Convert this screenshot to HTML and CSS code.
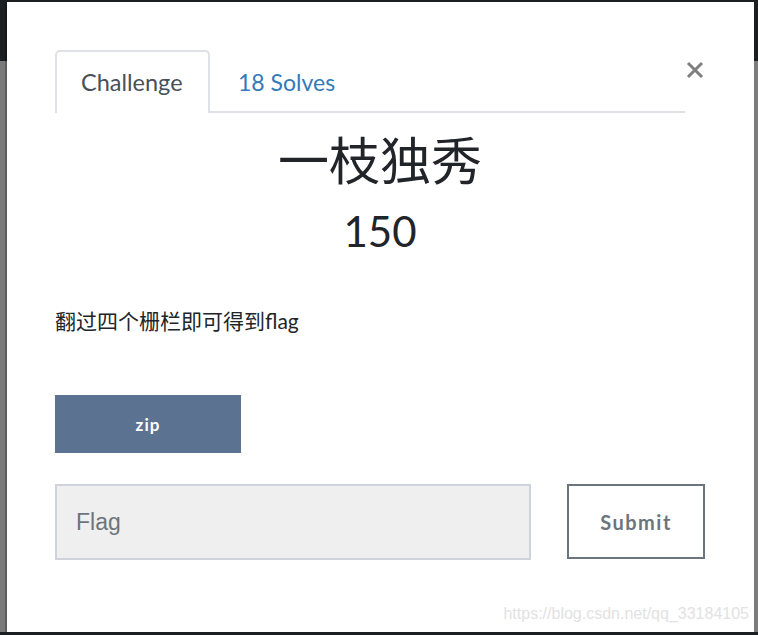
FILE: index.html
```html
<!DOCTYPE html>
<html>
<head>
<meta charset="utf-8">
<link rel="stylesheet" href="styles.css">
</head>
<body>
<div class="modal">
  <div class="modal-head">
    <nav class="tabs">
      <a class="tab active">Challenge</a>
      <a class="tab link">18 Solves</a>
    </nav>
    <button class="close" aria-label="Close">
      <svg width="18" height="18" viewBox="0 0 18 18"><path d="M2 2 L16 16 M16 2 L2 16" stroke="#7f7f7f" stroke-width="3" stroke-linecap="butt"/></svg>
    </button>
  </div>
  <h2 class="title">一枝独秀</h2>
  <h3 class="value">150</h3>
  <p class="desc">翻过四个栅栏即可得到flag</p>
  <div class="files"><a class="file-btn">zip</a></div>
  <form class="submit-row">
    <input class="flag-input" type="text" placeholder="Flag">
    <button class="submit-btn" type="button">Submit</button>
  </form>
  <div class="watermark">https://blog.csdn.net/qq_33184105</div>
</div>
</body>
</html>
```
FILE: styles.css
```css
html, body {
  margin: 0;
  padding: 0;
}
body {
  width: 758px;
  height: 635px;
  overflow: hidden;
  background: linear-gradient(to bottom, #1c1f22 0, #1c1f22 61px, #7b7b7b 61px, #7b7b7b 632px, #1c1f22 632px);
  font-family: Lato, "Noto Sans CJK SC", sans-serif;
}
.modal {
  position: relative;
  box-sizing: border-box;
  margin: 2px 4px 0 7px;
  width: 747px;
  height: 630px;
  background: #fff;
  padding: 48px 49px 0 48px;
  box-shadow: -2px 0 0 rgba(0,0,0,0.25);
}
.modal-head {
  display: flex;
  align-items: flex-start;
}
.tabs {
  flex: 1;
  display: flex;
  border-bottom: 2px solid #dee2e6;
  height: 61px;
}
.tab {
  display: block;
  box-sizing: border-box;
  height: 63px;
  font-size: 23.5px;
  line-height: 61px;
  padding: 0 24px;
  border: 2px solid transparent;
  border-bottom: none;
  border-radius: 5px 5px 0 0;
}
.tab.active {
  color: #495057;
  border-color: #dee2e6;
  background: #fff;
  width: 155px;
}
.tab.link {
  color: #337ab7;
  padding-left: 26px;
  font-size: 23px;
}
.close {
  border: none;
  background: none;
  padding: 0;
  margin: 11px 1px 0 1px;
  width: 18px;
  height: 18px;
  display: block;
}
.close svg { display: block; }
.title {
  margin: 19px 0 0;
  text-align: center;
  font-weight: 400;
  font-size: 51px;
  line-height: 58px;
  color: #212529;
}
.value {
  margin: 16px 0 0;
  text-align: center;
  font-weight: 400;
  font-size: 42px;
  line-height: 50px;
  color: #212529;
}
.desc {
  margin: 50px 0 0;
  font-size: 21px;
  line-height: 30px;
  color: #212529;
}
.files {
  margin-top: 59px;
}
.file-btn {
  display: flex;
  align-items: center;
  justify-content: center;
  width: 186px;
  height: 58px;
  background: #5b7290;
  color: #fff;
  font-weight: 700;
  font-size: 17px;
  letter-spacing: 1px;
}
.submit-row {
  display: flex;
  align-items: flex-start;
  margin: 31px 0 0;
  gap: 36px;
}
.flag-input {
  box-sizing: border-box;
  width: 476px;
  height: 76px;
  margin: 0;
  border: 2px solid #ced4da;
  background: #efefef;
  padding: 0 19px;
  font-family: "Liberation Sans", Arial, sans-serif;
  font-size: 23px;
  color: #495057;
  outline: none;
}
.flag-input::placeholder {
  color: #6c757d;
}
.submit-btn {
  box-sizing: border-box;
  width: 138px;
  height: 75px;
  margin: 0;
  border: 2px solid #6c757d;
  background: #fff;
  color: #6c757d;
  font-family: Lato, sans-serif;
  font-weight: 700;
  font-size: 20px;
  letter-spacing: 1.5px;
}
.watermark {
  position: absolute;
  right: 5px;
  top: 600px;
  font-family: "Liberation Sans", Arial, sans-serif;
  font-size: 16px;
  line-height: 24px;
  color: #e2e2e2;
  white-space: nowrap;
}
```
